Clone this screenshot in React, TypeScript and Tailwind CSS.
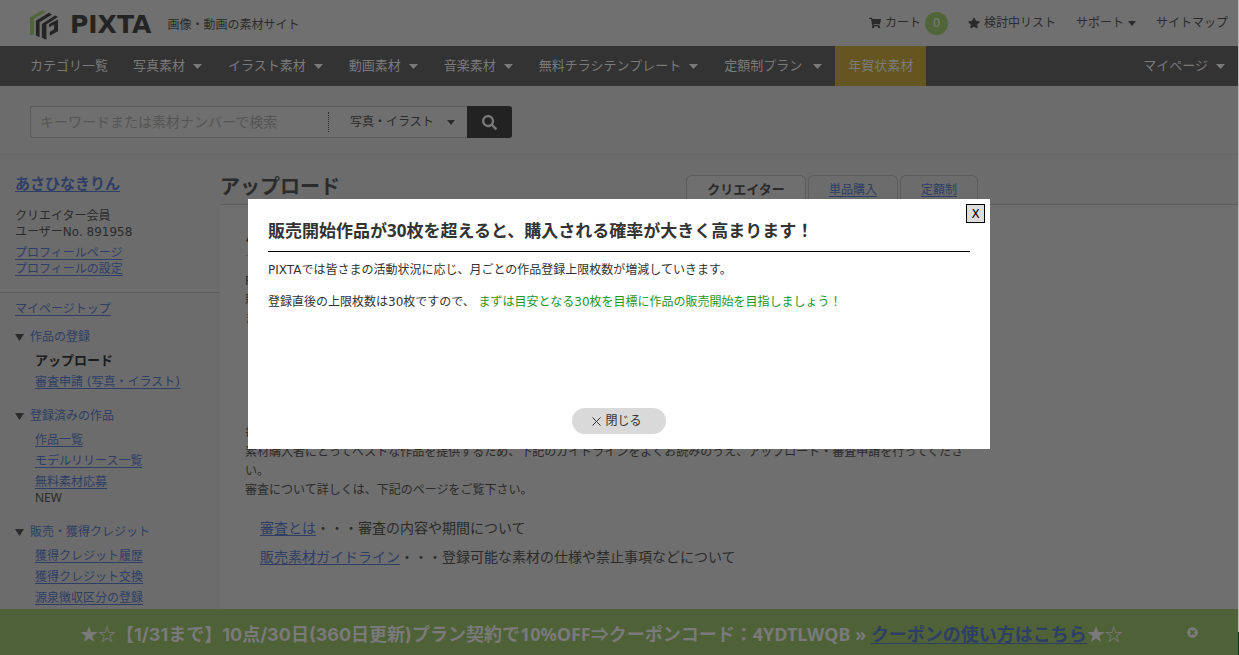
import type { ReactNode } from "react";
import { FaSearch, FaShoppingCart, FaStar, FaTimesCircle } from "react-icons/fa";

const NAV = ["写真素材", "イラスト素材", "動画素材", "音楽素材", "無料チラシテンプレート"];

const linkClass = "text-[#2e3e65] underline underline-offset-2";

function Caret({ size = 9 }: { size?: number }) {
  return (
    <svg width={size} height="5" viewBox="0 0 9 5" preserveAspectRatio="none" fill="currentColor" aria-hidden="true">
      <path d="M0 0H9L4.5 5Z" />
    </svg>
  );
}

function LogoMark() {
  return (
    <svg width="28" height="30" viewBox="0 0 85 90" aria-hidden="true">
      <path d="M0 22L38 0L48 5L12 27V73L0 76Z" fill="#50663a" />
      <path d="M18 32L57 8L67 13L29 37V82L18 77Z" fill="#242424" />
      <path d="M36 42L76 16L85 21L50 43V90L36 84Z" fill="#242424" />
      <path d="M58 42L85 28V64L60 78V66L73 58V44L58 52Z" fill="#242424" />
    </svg>
  );
}

function Header() {
  return (
    <header className="flex h-[46px] items-center justify-between bg-[#707070] pr-2.5 pl-[30px] text-xs">
      <div className="flex items-center pt-1">
        <a href="#home" className="flex items-center gap-3 text-[25px] leading-8 font-bold text-[#242424]">
          <LogoMark />
          <span className="font-['DejaVu_Sans']">PIXTA</span>
        </a>
        <p className="ml-4">画像・動画の素材サイト</p>
      </div>
      <ul className="flex items-center gap-5">
        <li>
          <a href="#cart" className="flex items-center">
            <FaShoppingCart size={12} />
            <span className="ml-1">カート</span>
            <span className="ml-1 grid size-[23px] place-items-center rounded-full bg-[#50663a] text-[#7b7b7b]">0</span>
          </a>
        </li>
        <li>
          <a href="#list" className="flex items-center gap-1">
            <FaStar size={12} />
            検討中リスト
          </a>
        </li>
        <li>
          <a href="#support" className="flex items-center gap-1">
            サポート
            <Caret size={8} />
          </a>
        </li>
        <li>
          <a href="#sitemap">サイトマップ</a>
        </li>
      </ul>
    </header>
  );
}

function Nav() {
  return (
    <nav className="flex h-10 items-stretch bg-[#333] pl-[17px] text-[13px] text-[#7a7a7a]">
      <a href="#category" className="flex items-center pr-3 pl-[13px]">カテゴリ一覧</a>
      {NAV.map((label) => (
        <a key={label} href="#nav" className="flex items-center gap-2 px-[13px]">
          {label}
          <Caret />
        </a>
      ))}
      <a href="#plan" className="flex items-center gap-[11px] px-[13px]">
        定額制プラン
        <Caret />
      </a>
      <a href="#newyear" className="flex items-center bg-[#655621] px-[13px]">年賀状素材</a>
      <a href="#mypage" className="ml-auto flex items-center gap-2 px-[13px]">
        マイページ
        <Caret />
      </a>
    </nav>
  );
}

function Search() {
  return (
    <form className="flex h-[69px] items-start border-b border-[#676767] px-[30px] pt-5">
      <div className="flex h-8 w-[437px] items-center rounded-l-[3px] border border-r-0 border-[#5c5c5c] bg-[#6f6f6f] text-[#2b2b2b]">
        <input
          type="text"
          aria-label="キーワード"
          placeholder="キーワードまたは素材ナンバーで検索"
          className="min-w-0 flex-1 pl-[9px] text-sm outline-none placeholder:text-[#555]"
        />
        <div className="flex h-5 items-center border-l border-dotted border-[#2b2b2b] pr-3 pl-[21px]">
          <select aria-label="素材の種類" className="w-[97px] appearance-none text-xs">
            <option>写真・イラスト</option>
          </select>
          <Caret size={8} />
        </div>
      </div>
      <button type="button" aria-label="検索" className="grid h-8 w-[45px] place-items-center rounded-r-[3px] bg-[#222] text-[#777]">
        <FaSearch size={15} />
      </button>
    </form>
  );
}

function MenuGroup({ title, children }: { title: string; children: ReactNode }) {
  return (
    <section className="mb-[18px] last:mb-[3px]">
      <h3 className="flex items-center gap-1.5 leading-4 text-[#2e3e65]">
        <svg width="9" height="7" viewBox="0 0 9 7" fill="#2b2b2b" aria-hidden="true">
          <path d="M0 0H9L4.5 7Z" />
        </svg>
        {title}
      </h3>
      <ul className="mt-2 space-y-[5px] pl-5 leading-4">{children}</ul>
    </section>
  );
}

function MenuLink({ children }: { children: ReactNode }) {
  return (
    <a href="#menu" className={linkClass}>
      {children}
    </a>
  );
}

function Sidebar() {
  return (
    <aside className="w-[220px] shrink-0 text-xs leading-4">
      <div className="border-b border-[#5c5c5c] px-[15px] pt-[19px] pb-[15px]">
        <a href="#user" className={`block text-[15px] leading-5 font-bold ${linkClass}`}>あさひなきりん</a>
        <p className="mt-[14px]">クリエイター会員</p>
        <p>ユーザーNo. 891958</p>
        <p className="mt-[5px]"><MenuLink>プロフィールページ</MenuLink></p>
        <p><MenuLink>プロフィールの設定</MenuLink></p>
      </div>
      <div className="px-[15px] pt-2">
        <p className="mb-3"><MenuLink>マイページトップ</MenuLink></p>
        <MenuGroup title="作品の登録">
          <li className="text-[13px] font-bold text-[#1c1c1c]">アップロード</li>
          <li><MenuLink>審査申請 (写真・イラスト)</MenuLink></li>
        </MenuGroup>
        <MenuGroup title="登録済みの作品">
          <li><MenuLink>作品一覧</MenuLink></li>
          <li><MenuLink>モデルリリース一覧</MenuLink></li>
          <li>
            <MenuLink>無料素材応募</MenuLink>
            <p className="font-['Noto_Sans']">NEW</p>
          </li>
        </MenuGroup>
        <MenuGroup title="販売・獲得クレジット">
          <li><MenuLink>獲得クレジット履歴</MenuLink></li>
          <li><MenuLink>獲得クレジット交換</MenuLink></li>
          <li><MenuLink>源泉徴収区分の登録</MenuLink></li>
        </MenuGroup>
      </div>
    </aside>
  );
}

function Content() {
  return (
    <main className="flex min-w-0 flex-1 flex-col">
      <div className="flex h-[50px] items-end border-b border-[#5c5c5c]">
        <h1 className="w-[466px] pb-[3px] text-xl leading-7 font-bold">アップロード</h1>
        <div className="flex gap-0.5 text-xs leading-7">
          <span className="w-[120px] rounded-t-md border border-b-0 border-[#5c5c5c] bg-[#6f6f6f] text-center text-[13px] leading-7 font-bold">
            クリエイター
          </span>
          <span className="w-[90px] rounded-t-md border border-b-0 border-[#5c5c5c] text-center">
            <a href="#single" className={linkClass}>単品購入</a>
          </span>
          <span className="w-[78px] rounded-t-md border border-b-0 border-[#5c5c5c] text-center">
            <a href="#flat" className={linkClass}>定額制</a>
          </span>
        </div>
      </div>
      <div className="flex-1 bg-[#6f6f6f] pl-[25px]">
        <div className="max-w-[724px] text-xs leading-[19px]">
          <h2 className="border-b border-[#5c5c5c] pt-5 pb-1.5 text-base leading-6 font-bold">ハ</h2>
          <p className="mt-4">P<br />新<br />ま</p>
          <p className="mt-[95px]">
            毎<br />
            素材購入者にとってベストな作品を提供するため、下記のガイドラインをよくお読みのうえ、アップロード・審査申請を行ってください。<br />
            審査について詳しくは、下記のページをご覧下さい。
          </p>
          <ul className="mt-[18px] space-y-[9px] pl-[15px] text-sm leading-5">
            <li><a href="#review" className={linkClass}>審査とは</a>・・・審査の内容や期間について</li>
            <li><a href="#guide" className={linkClass}>販売素材ガイドライン</a>・・・登録可能な素材の仕様や禁止事項などについて</li>
          </ul>
        </div>
      </div>
    </main>
  );
}

function Banner() {
  return (
    <footer className="flex h-[46px] items-center bg-[#4f6137] pr-10 font-['Noto_Sans','Noto_Sans_CJK_JP',sans-serif] text-lg font-bold text-[#7a7a7a]">
      <p className="flex-1 pt-1 pl-4 text-center whitespace-nowrap">
        <span className="font-['Noto_Sans_CJK_JP']">★☆</span>
        <span className="font-['Inter','Noto_Sans_CJK_JP',sans-serif]">【1/31まで】10点/30日(360日更新)</span>
        プラン契約で10%OFF⇒クーポンコード：4YDTLWQB »{" "}
        <a href="#coupon" className={linkClass}>クーポンの使い方はこちら</a>
        <span className="font-['Noto_Sans_CJK_JP']">★☆</span>
      </p>
      <button type="button" aria-label="お知らせを閉じる">
        <FaTimesCircle size={11} />
      </button>
    </footer>
  );
}

function Modal() {
  return (
    <div className="fixed inset-0 flex items-center justify-center pr-px pb-[7px]">
      <section role="dialog" aria-modal="true" aria-labelledby="dialog-title" className="relative flex h-[250px] w-[742px] flex-col bg-white px-5 pt-[19px] pb-[15px] text-xs leading-4 text-[#333]">
        <button type="button" aria-label="X" className="absolute top-[5px] right-[5px] grid size-[19px] place-items-center border border-black bg-[#ddd] text-black">
          X
        </button>
        <h2 id="dialog-title" className="border-b border-black pb-[7px] font-['Noto_Sans','Noto_Sans_CJK_JP',sans-serif] text-[17px] leading-[26px] font-bold">
          販売開始作品が30枚を超えると、購入される確率が大きく高まります！
        </h2>
        <p className="mt-2.5">PIXTAでは皆さまの活動状況に応じ、月ごとの作品登録上限枚数が増減していきます。</p>
        <p className="mt-4">
          登録直後の上限枚数は30枚ですので、 <span className="text-[#1f961f]">まずは目安となる30枚を目標に作品の販売開始を目指しましょう！</span>
        </p>
        <button type="button" className="mt-auto flex h-[26px] w-[94px] items-center justify-center gap-1 self-center rounded-full bg-[#d9d9d9] pr-1">
          <svg width="9" height="9" viewBox="0 0 9 9" stroke="currentColor" aria-hidden="true">
            <path d="M0.5 0.5L8.5 8.5M8.5 0.5L0.5 8.5" />
          </svg>
          閉じる
        </button>
      </section>
    </div>
  );
}

export default function App() {
  return (
    <div className="flex min-h-screen bg-[#6c6c6c] font-['DejaVu_Sans','Noto_Sans_CJK_JP',sans-serif] text-[#2b2b2b]">
      <div className="flex min-w-0 flex-1 flex-col">
        <Header />
        <Nav />
        <Search />
        <div className="flex flex-1">
          <Sidebar />
          <Content />
        </div>
        <Banner />
      </div>
      <div className="flex w-px flex-col bg-[#bbb]">
        <div className="mt-auto h-[23px] bg-[#003d20]" />
      </div>
      <Modal />
    </div>
  );
}
